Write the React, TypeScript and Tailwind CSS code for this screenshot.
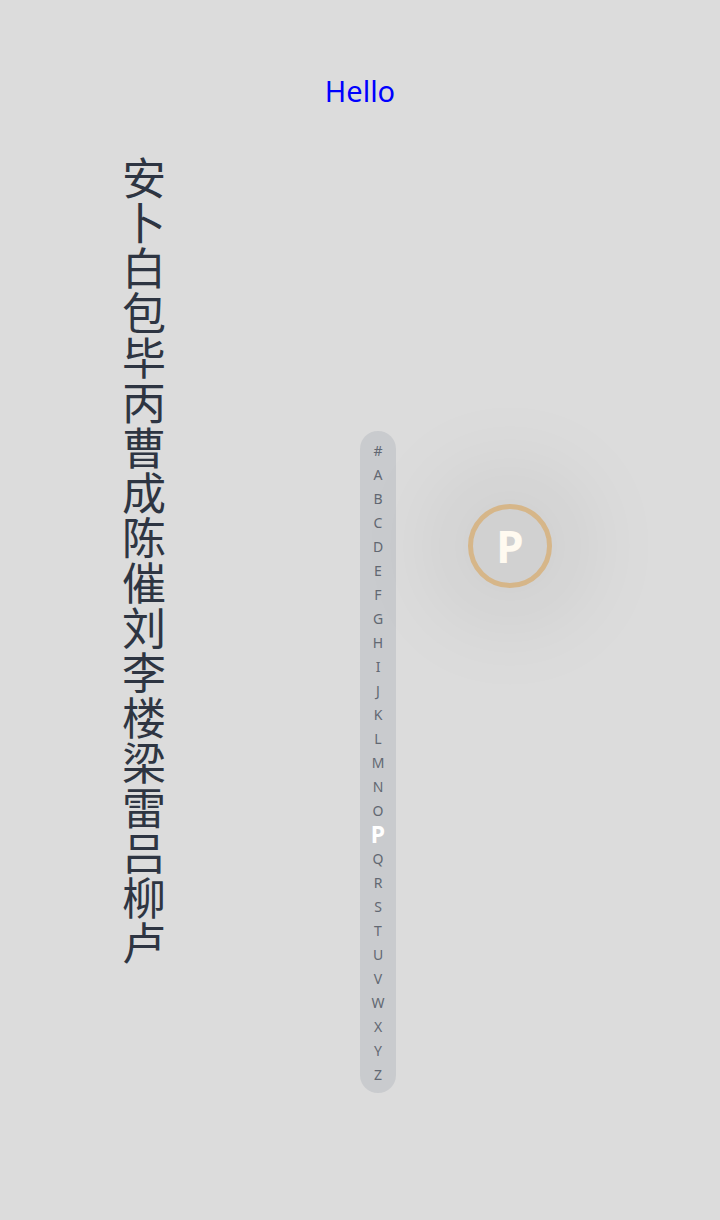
import React from "react";

const names = "安卜白包毕丙曹成陈催刘李楼梁雷吕柳卢";
const letters = ["#","A","B","C","D","E","F","G","H","I","J","K","L","M","N","O","P","Q","R","S","T","U","V","W","X","Y","Z"];

export default function App() {
  return (
    <div
      className="relative w-[720px] h-[1220px] bg-[#dcdcdc] overflow-hidden"
      style={{ fontFamily: '"Noto Sans", "Noto Sans CJK SC", sans-serif' }}
    >
      <div className="pt-[73px] flex justify-center">
        <span className="text-[29px] leading-[36px] text-[#0000ff]">Hello</span>
      </div>
      <div className="flex items-start mt-[45px]">
        <p
          className="ml-[122px] w-[44px] break-all text-[#2e3542] text-[44px] leading-[45px]"
          style={{ fontFamily: '"Noto Sans CJK SC", sans-serif' }}
        >
          {names}
        </p>
        <div className="ml-[194px] mt-[277px] w-[36px] rounded-full bg-[#c9cbce] py-[7px] flex flex-col items-center">
          {letters.map((l) =>
            l === "P" ? (
              <span key={l} className="h-[24px] flex items-center justify-center text-[23px] font-bold text-white">
                {l}
              </span>
            ) : (
              <span key={l} className="h-[24px] flex items-center justify-center text-[14px] text-[#626872]">
                {l}
              </span>
            )
          )}
        </div>
      </div>
      <div className="absolute left-[468px] top-[504px] w-[84px] h-[84px] rounded-full border-[5px] border-[#d6b689] bg-[#d1d1d1] shadow-[0_0_100px_28px_rgba(0,0,0,0.08)] flex items-center justify-center">
        <span className="text-[44px] leading-none font-bold text-[#fffaf0]">P</span>
      </div>
    </div>
  );
}
